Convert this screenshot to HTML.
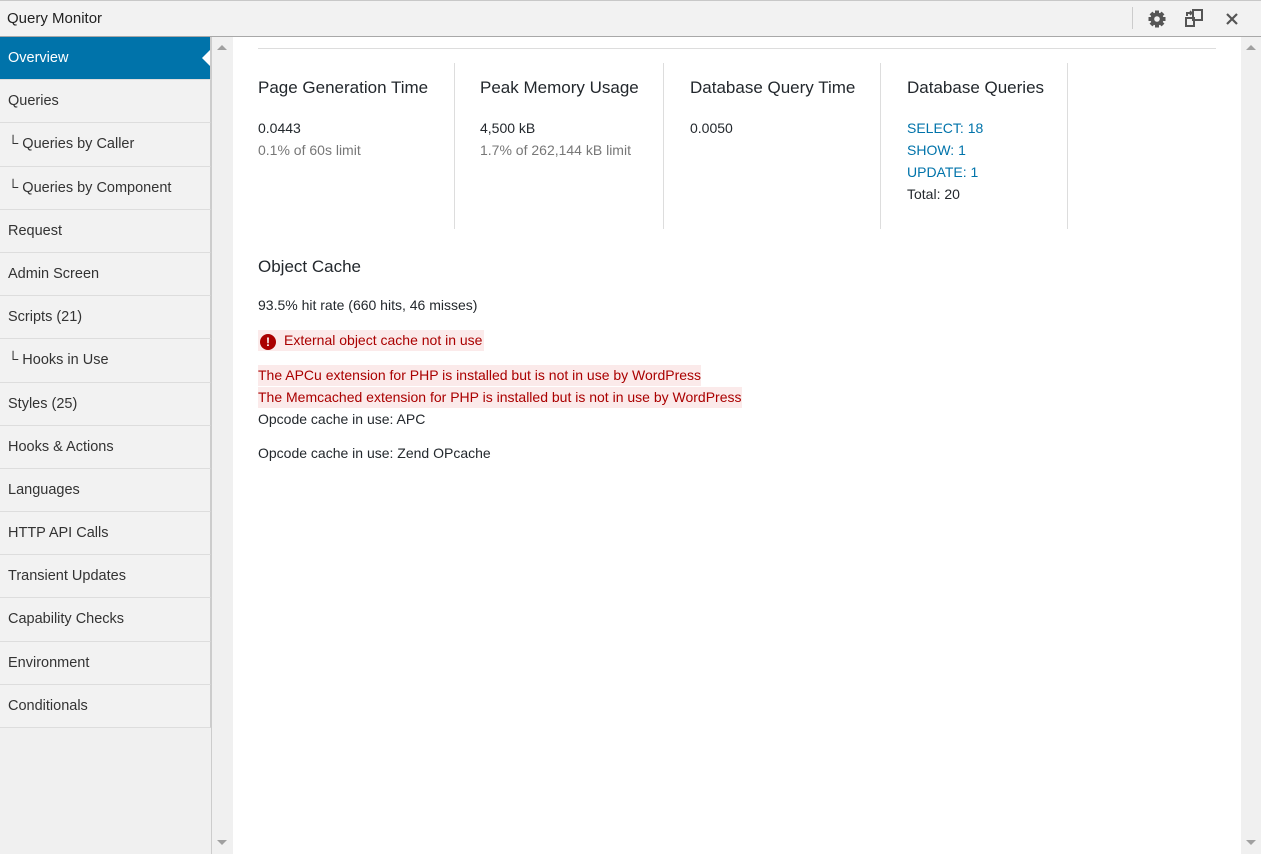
<!DOCTYPE html>
<html><head><meta charset="utf-8"><style>
*{margin:0;padding:0;box-sizing:border-box}
body{width:1261px;height:854px;overflow:hidden;background:#fff;font-family:"Liberation Sans",sans-serif;font-size:14px;color:#23282d;position:relative}
.a{position:absolute;white-space:nowrap}
#top{position:absolute;left:0;top:0;width:1261px;height:37px;background:#f2f2f2;border-top:1px solid #c8c8c8;border-bottom:1px solid #a8a8a8}
#side{position:absolute;left:0;top:37px;width:212px;height:817px;background:#f0f0f0;border-right:1px solid #ccc}
.it{height:43.2px;border-bottom:1px solid #ddd;padding-left:8px;line-height:43px;font-size:14.5px;color:#333;background:#f2f2f2;border-right:1px solid #ccc}
.it.on{background:#0073aa;color:#fff;position:relative}
.it.on:after{content:"";position:absolute;right:0;top:13px;border:8px solid transparent;border-right-color:#fff}
.sb{position:absolute;top:37px;width:21px;height:817px;background:#f0f0f0}
.v{position:absolute;top:63px;width:1px;height:166px;background:#ddd}
h3{font-weight:normal;font-size:17px;color:#23282d;position:absolute;white-space:nowrap}
.g{color:#777}.b{color:#0073aa}
.err{background:#fbeaea;color:#a00}
</style></head><body>
<div id="top"><div class="a" style="left:7px;top:9px;font-size:15px;color:#222">Query Monitor</div>
<div class="a" style="left:1132px;top:6px;width:1px;height:22px;background:#ccc"></div>
<svg class="a" style="left:1147px;top:8px" width="20" height="20" viewBox="0 0 20 20"><g fill="#555"><circle cx="10" cy="10" r="6.5"/><rect x="8" y="1.5" width="4" height="17"/><rect x="1.5" y="8" width="17" height="4"/><rect x="8" y="1.5" width="4" height="17" transform="rotate(45 10 10)"/><rect x="8" y="1.5" width="4" height="17" transform="rotate(-45 10 10)"/></g><circle cx="10" cy="10" r="2.8" fill="#f2f2f2"/></svg>
<svg class="a" style="left:1184px;top:7px" width="22" height="22" viewBox="0 0 22 22" fill="none" stroke="#555" stroke-width="2"><rect x="9" y="2" width="9" height="10"/><rect x="2" y="10" width="8" height="8"/><path d="M3 8 V5 H7" /><path d="M6 3 L8 5 L6 7" stroke-width="1.5"/></svg>
<svg class="a" style="left:1225px;top:11px" width="14" height="14" viewBox="0 0 14 14" stroke="#555" stroke-width="2.2"><path d="M2 2L12 12M12 2L2 12"/></svg>
</div>
<div id="side">
<div class="it on">Overview</div>
<div class="it">Queries</div>
<div class="it">└ Queries by Caller</div>
<div class="it">└ Queries by Component</div>
<div class="it">Request</div>
<div class="it">Admin Screen</div>
<div class="it">Scripts (21)</div>
<div class="it">└ Hooks in Use</div>
<div class="it">Styles (25)</div>
<div class="it">Hooks &amp; Actions</div>
<div class="it">Languages</div>
<div class="it">HTTP API Calls</div>
<div class="it">Transient Updates</div>
<div class="it">Capability Checks</div>
<div class="it">Environment</div>
<div class="it">Conditionals</div>
</div>
<div class="sb" style="left:212px"></div>
<div class="sb" style="left:1241px"></div>
<div class="a" style="left:217px;top:45px;border:5px solid transparent;border-bottom:5px solid #a0a0a0;border-top:0"></div>
<div class="a" style="left:217px;top:840px;border:5px solid transparent;border-top:5px solid #a0a0a0;border-bottom:0"></div>
<div class="a" style="left:1246px;top:45px;border:5px solid transparent;border-bottom:5px solid #a0a0a0;border-top:0"></div>
<div class="a" style="left:1246px;top:840px;border:5px solid transparent;border-top:5px solid #a0a0a0;border-bottom:0"></div>
<div class="a" style="left:258px;top:48px;width:958px;height:1px;background:#ddd"></div>
<div class="v" style="left:454px"></div><div class="v" style="left:663px"></div><div class="v" style="left:880px"></div><div class="v" style="left:1067px"></div>
<h3 style="left:258px;top:78px">Page Generation Time</h3>
<h3 style="left:480px;top:78px">Peak Memory Usage</h3>
<h3 style="left:690px;top:78px">Database Query Time</h3>
<h3 style="left:907px;top:78px">Database Queries</h3>
<div class="a" style="left:258px;top:117px;line-height:22px">0.0443<br><span class="g">0.1% of 60s limit</span></div>
<div class="a" style="left:480px;top:117px;line-height:22px">4,500 kB<br><span class="g">1.7% of 262,144 kB limit</span></div>
<div class="a" style="left:690px;top:117px;line-height:22px">0.0050</div>
<div class="a" style="left:907px;top:117px;line-height:22px"><span class="b">SELECT: 18</span><br><span class="b">SHOW: 1</span><br><span class="b">UPDATE: 1</span><br>Total: 20</div>
<h3 style="left:258px;top:257px">Object Cache</h3>
<div class="a" style="left:258px;top:297px">93.5% hit rate (660 hits, 46 misses)</div>
<div class="a err" style="left:258px;top:330px;height:21px;line-height:21px;padding-right:2px"><span style="display:inline-block;width:16px;height:16px;border-radius:50%;background:#a00;color:#fff;text-align:center;line-height:16px;font-weight:bold;font-size:12px;vertical-align:-1px;margin:0 8px 0 2px">!</span>External object cache not in use</div>
<div class="a err" style="left:258px;top:365px;height:21px;line-height:21px">The APCu extension for PHP is installed but is not in use by WordPress</div>
<div class="a err" style="left:258px;top:387px;height:21px;line-height:21px">The Memcached extension for PHP is installed but is not in use by WordPress</div>
<div class="a" style="left:258px;top:409px;line-height:21px">Opcode cache in use: APC</div>
<div class="a" style="left:258px;top:443px;line-height:21px">Opcode cache in use: Zend OPcache</div>
</body></html>
